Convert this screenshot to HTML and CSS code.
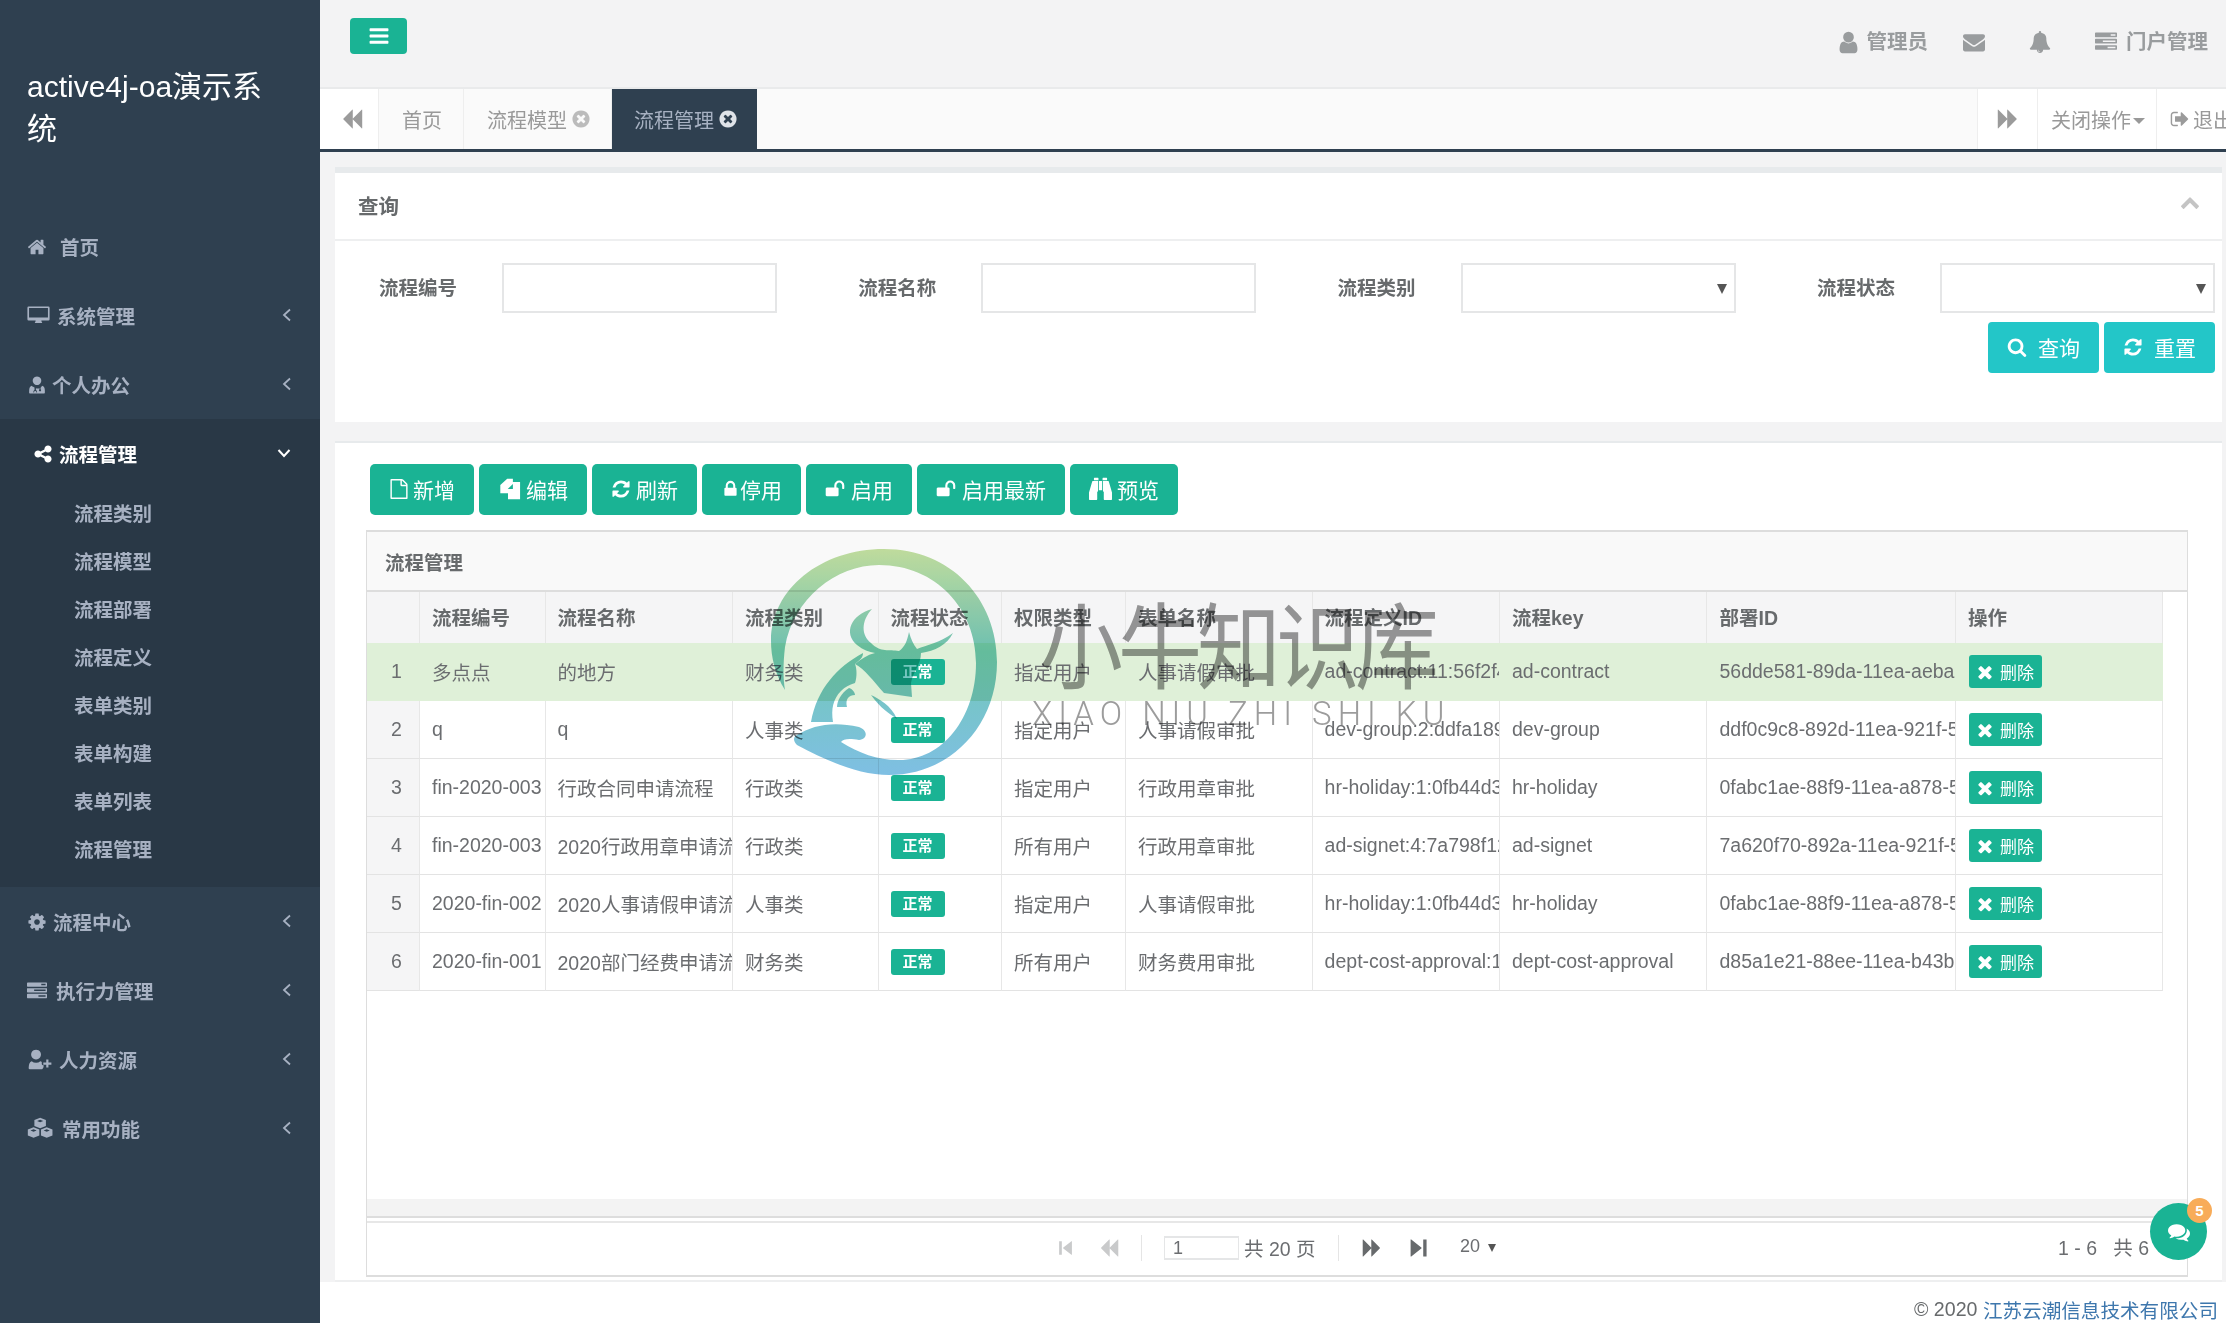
FILE: index.html
```html
<!DOCTYPE html>
<html lang="zh-CN">
<head>
<meta charset="utf-8">
<title>active4j-oa</title>
<link rel="stylesheet" href="styles.css">
</head>
<body>
<svg class="sprite" xmlns="http://www.w3.org/2000/svg">
<symbol id="bars" viewBox="0 0 1792 1792" preserveAspectRatio="xMinYMid meet"><path d="M1664 1344v128q0 26-19 45t-45 19h-1408q-26 0-45-19t-19-45v-128q0-26 19-45t45-19h1408q26 0 45 19t19 45zm0-512v128q0 26-19 45t-45 19h-1408q-26 0-45-19t-19-45v-128q0-26 19-45t45-19h1408q26 0 45 19t19 45zm0-512v128q0 26-19 45t-45 19h-1408q-26 0-45-19t-19-45v-128q0-26 19-45t45-19h1408q26 0 45 19t19 45z"/></symbol>
<symbol id="search" viewBox="0 0 1792 1792" preserveAspectRatio="xMinYMid meet"><path d="M1216 832q0-185-131.5-316.5t-316.5-131.5-316.5 131.5-131.5 316.5 131.5 316.5 316.5 131.5 316.5-131.5 131.5-316.5zm512 832q0 52-38 90t-90 38q-54 0-90-38l-343-342q-179 124-399 124-143 0-273.5-55.5t-225-150-150-225-55.5-273.5 55.5-273.5 150-225 225-150 273.5-55.5 273.5 55.5 225 150 150 225 55.5 273.5q0 220-124 399l343 343q37 37 37 90z"/></symbol>
<symbol id="refresh" viewBox="0 0 1792 1792" preserveAspectRatio="xMinYMid meet"><path d="M1639 1056q0 5-1 7-64 268-268 434.5t-478 166.5q-146 0-282.5-55t-243.5-157l-129 129q-19 19-45 19t-45-19-19-45v-448q0-26 19-45t45-19h448q26 0 45 19t19 45-19 45l-137 137q71 66 161 102t187 36q134 0 250-65t186-179q11-17 53-117 8-23 30-23h192q13 0 22.5 9.5t9.5 22.5zm25-800v448q0 26-19 45t-45 19h-448q-26 0-45-19t-19-45 19-45l138-138q-148-137-349-137-134 0-250 65t-186 179q-11 17-53 117-8 23-30 23h-199q-13 0-22.5-9.5t-9.5-22.5v-7q65-268 270-434.5t480-166.5q146 0 284 55.5t245 156.5l130-129q19-19 45-19t45 19 19 45z"/></symbol>
<symbol id="times" viewBox="0 0 1792 1792" preserveAspectRatio="xMinYMid meet"><path d="M1490 1322q0 40-28 68l-136 136q-28 28-68 28t-68-28l-294-294-294 294q-28 28-68 28t-68-28l-136-136q-28-28-28-68t28-68l294-294-294-294q-28-28-28-68t28-68l136-136q28-28 68-28t68 28l294 294 294-294q28-28 68-28t68 28l136 136q28 28 28 68t-28 68l-294 294 294 294q28 28 28 68z"/></symbol>
<symbol id="lock" viewBox="0 0 1792 1792" preserveAspectRatio="xMinYMid meet"><path d="M640 768h512v-192q0-106-75-181t-181-75-181 75-75 181v192zm832 96v576q0 40-28 68t-68 28h-960q-40 0-68-28t-28-68v-576q0-40 28-68t68-28h32v-192q0-184 132-316t316-132 316 132 132 316v192h32q40 0 68 28t28 68z"/></symbol>
<symbol id="unlock" viewBox="0 0 1792 1792" preserveAspectRatio="xMinYMid meet"><path d="M1728 576v256q0 26-19 45t-45 19h-64q-26 0-45-19t-19-45v-256q0-106-75-181t-181-75-181 75-75 181v192h96q40 0 68 28t28 68v576q0 40-28 68t-68 28h-960q-40 0-68-28t-28-68v-576q0-40 28-68t68-28h672v-192q0-185 131.5-316.5t316.5-131.5 316.5 131.5 131.5 316.5z"/></symbol>
<symbol id="user" viewBox="0 0 1792 1792" preserveAspectRatio="xMinYMid meet"><path d="M1536 1399q0 109-62.5 187t-150.5 78h-854q-88 0-150.5-78t-62.5-187q0-85 8.5-160.5t31.5-152 58.5-131 94-89 134.5-34.5q131 128 313 128t313-128q76 0 134.5 34.5t94 89 58.5 131 31.5 152 8.5 160.5zm-256-887q0 159-112.5 271.5t-271.5 112.5-271.5-112.5-112.5-271.5 112.5-271.5 271.5-112.5 271.5 112.5 112.5 271.5z"/></symbol>
<symbol id="envelope" viewBox="0 0 1792 1792" preserveAspectRatio="xMinYMid meet"><path d="M1792 710v794q0 66-47 113t-113 47h-1472q-66 0-113-47t-47-113v-794q44 49 101 87 362 246 497 345 57 42 92.5 65.5t94.5 48 110 24.5h2q51 0 110-24.5t94.5-48 92.5-65.5q170-123 498-345 57-39 100-87zm0-294q0 79-49 151t-122 123q-376 261-468 325-10 7-42.5 30.5t-54 38-52 32.5-57.5 27-50 9h-2q-23 0-50-9t-57.5-27-52-32.5-54-38-42.5-30.5q-91-64-262-182.5t-205-142.5q-62-42-117-115.5t-55-136.5q0-78 41.5-130t118.5-52h1472q65 0 112.5 47t47.5 113z"/></symbol>
<symbol id="bell" viewBox="0 0 1792 1792" preserveAspectRatio="xMinYMid meet"><path d="M912 1696q0-16-16-16-59 0-101.5-42.5t-42.5-101.5q0-16-16-16t-16 16q0 73 51.5 124.5t124.5 51.5q16 0 16-16zm816-288q0 52-38 90t-90 38h-448q0 106-75 181t-181 75-181-75-75-181h-448q-52 0-90-38t-38-90q50-42 91-88t85-119.5 74.5-158.5 50-206 19.5-260q0-152 117-282.5t307-158.5q-8-19-8-39 0-40 28-68t68-28 68 28 28 68q0 20-8 39 190 28 307 158.5t117 282.5q0 139 19.5 260t50 206 74.5 158.5 85 119.5 91 88z"/></symbol>
<symbol id="home" viewBox="0 0 1792 1792" preserveAspectRatio="xMinYMid meet"><path d="M1472 992v480q0 26-19 45t-45 19h-384v-384h-256v384h-384q-26 0-45-19t-19-45v-480q0-1 .5-3t.5-3l575-474 575 474q1 2 1 6zm223-69l-62 74q-8 9-21 11h-3q-13 0-21-7l-692-577-692 577q-12 8-24 7-13-2-21-11l-62-74q-8-10-7-23.5t11-21.5l719-599q32-26 76-26t76 26l244 204v-195q0-14 9-23t23-9h192q14 0 23 9t9 23v408l219 182q10 8 11 21.5t-7 23.5z"/></symbol>
<symbol id="desktop" viewBox="0 0 1792 1792" preserveAspectRatio="xMinYMid meet"><path fill-rule="evenodd" d="M128 192h1536q96 0 96 96v896q0 96-96 96h-544q0 96 64 160 16 32-32 32h-512q-48 0-32-32 64-64 64-160h-544q-96 0-96-96v-896q0-96 96-96zm32 128v736h1472v-736z"/></symbol>
<symbol id="userMd" viewBox="0 0 1792 1792" preserveAspectRatio="xMinYMid meet"><path fill-rule="evenodd" d="M896 128a384 384 0 1 1-1 0zM448 960q-256 64-256 448v192q0 64 64 64h1280q64 0 64-64v-192q0-384-256-448-64 130-128 192v130a96 96 0 1 1-96 0v-105q-160 80-320 0v170q100 40 100 160v64h-64v-64q0-64-100-64t-100 64v64h-64v-64q0-120 100-160v-230q-140-80-224-100z"/></symbol>
<symbol id="share" viewBox="0 0 1792 1792" preserveAspectRatio="xMinYMid meet"><path d="M1344 1024q133 0 226.5 93.5t93.5 226.5-93.5 226.5-226.5 93.5-226.5-93.5-93.5-226.5q0-12 2-34l-360-180q-92 86-218 86-133 0-226.5-93.5t-93.5-226.5 93.5-226.5 226.5-93.5q126 0 218 86l360-180q-2-22-2-34 0-133 93.5-226.5t226.5-93.5 226.5 93.5 93.5 226.5-93.5 226.5-226.5 93.5q-126 0-218-86l-360 180q2 22 2 34t-2 34l360 180q92-86 218-86z"/></symbol>
<symbol id="cog" viewBox="0 0 1792 1792" preserveAspectRatio="xMinYMid meet"><path d="M1152 896q0-106-75-181t-181-75-181 75-75 181 75 181 181 75 181-75 75-181zm512-109v222q0 12-8 23t-20 13l-185 28q-19 54-39 91 35 50 107 138 10 12 10 25t-9 23q-27 37-99 108t-94 71q-12 0-26-9l-138-108q-44 23-91 38-16 136-29 186-7 28-36 28h-222q-14 0-24.5-8.5t-11.5-21.5l-28-184q-49-16-90-37l-141 107q-10 9-25 9-14 0-25-11-126-114-165-168-7-10-7-23 0-12 8-23 15-21 51-66.5t54-70.5q-27-50-41-99l-183-27q-13-2-21-12.5t-8-23.5v-222q0-12 8-23t19-13l186-28q14-46 39-92-40-57-107-138-10-12-10-24 0-10 9-23 26-36 98.5-107.5t94.5-71.5q13 0 26 10l138 107q44-23 91-38 16-136 29-186 7-28 36-28h222q14 0 24.5 8.5t11.5 21.5l28 184q49 16 90 37l142-107q9-9 24-9 13 0 25 10 129 119 165 170 7 8 7 22 0 12-8 23-15 21-51 66.5t-54 70.5q26 50 41 98l183 28q13 2 21 12.5t8 23.5z"/></symbol>
<symbol id="tasks" viewBox="0 0 1792 1792" preserveAspectRatio="xMinYMid meet"><path d="M1024 1408h640v-128h-640v128zm-384-512h1024v-128h-1024v128zm640-512h384v-128h-384v128zm512 832v256q0 26-19 45t-45 19h-1664q-26 0-45-19t-19-45v-256q0-26 19-45t45-19h1664q26 0 45 19t19 45zm0-512v256q0 26-19 45t-45 19h-1664q-26 0-45-19t-19-45v-256q0-26 19-45t45-19h1664q26 0 45 19t19 45zm0-512v256q0 26-19 45t-45 19h-1664q-26 0-45-19t-19-45v-256q0-26 19-45t45-19h1664q26 0 45 19t19 45z"/></symbol>
<symbol id="userPlus" viewBox="0 0 2048 1792" preserveAspectRatio="xMinYMid meet"><path d="M704 896a384 384 0 1 1 1 0zM1184 1664H224q-96 0-96-112 0-460 240-528 140 120 336 120t336 -120q60 14 110 60v172q0 90 90 90h60v60q0 130 -116 258zM1500 896h170v230h230v170h-230v230h-170v-230h-230v-170h230z"/></symbol>
<symbol id="cubes" viewBox="0 0 2048 1792" preserveAspectRatio="xMinYMid meet"><path fill-rule="evenodd" d="M1024 64l448 176v470l-448 176-448-176V240zM1024 220l-240 94 240 94 240-94zM512 800l448 176v470l-448 176-448-176V976zM512 956l-240 94 240 94 240-94zM1536 800l448 176v470l-448 176-448-176V976zM1536 956l-240 94 240 94 240-94z"/></symbol>
<symbol id="binoculars" viewBox="0 0 1792 1792" preserveAspectRatio="xMinYMid meet"><path d="M704 320v768q0 26-19 45t-45 19v576q0 26-19 45t-45 19h-512q-26 0-45-19t-19-45v-512l249-873q7-23 31-23h424zm320 0v704h-256v-704h256zm768 896v512q0 26-19 45t-45 19h-512q-26 0-45-19t-19-45v-576q-26 0-45-19t-19-45v-768h424q24 0 31 23zM736 96v160h-352v-160q0-14 9-23t23-9h288q14 0 23 9t9 23zm672 0v160h-352v-160q0-14 9-23t23-9h288q14 0 23 9t9 23z"/></symbol>
<symbol id="fileO" viewBox="0 0 1792 1792" preserveAspectRatio="xMinYMid meet"><path d="M1596 380q28 28 48 76t20 88v1152q0 40-28 68t-68 28h-1344q-40 0-68-28t-28-68v-1600q0-40 28-68t68-28h896q40 0 88 20t76 48zm-444-244v376h376q-10-29-22-41l-313-313q-12-12-41-22zm384 1528v-1024h-416q-40 0-68-28t-28-68v-416h-768v1536h1280z"/></symbol>
<symbol id="files" viewBox="0 0 1792 1792" preserveAspectRatio="xMinYMid meet"><path fill-rule="evenodd" d="M1000 128h-280l-540 500v640h600v460h940v-1340h-560v-260zM1160 540v400h-400z"/></symbol>
<symbol id="backward" viewBox="0 0 1792 1792" preserveAspectRatio="xMinYMid meet"><path d="M1683 141q19-19 32-13t13 32v1472q0 26-13 32t-32-13l-710-710q-9-9-13-19v710q0 26-13 32t-32-13l-710-710q-19-19-19-45t19-45l710-710q19-19 32-13t13 32v710q4-10 13-19z"/></symbol>
<symbol id="forward" viewBox="0 0 1792 1792" preserveAspectRatio="xMinYMid meet"><path d="M109 1651q-19 19-32 13t-13-32v-1472q0-26 13-32t32 13l710 710q9 9 13 19v-710q0-26 13-32t32 13l710 710q19 19 19 45t-19 45l-710 710q-19 19-32 13t-13-32v-710q-4 10-13 19z"/></symbol>
<symbol id="stepB" viewBox="0 0 1792 1792" preserveAspectRatio="xMinYMid meet"><path d="M128 128h300v1536H128zM1500 141q30-30 44-13t14 32v1472q0 26-14 32t-44-13l-900-710q-30-26-30-45t30-45z"/></symbol>
<symbol id="stepF" viewBox="0 0 1792 1792" preserveAspectRatio="xMinYMid meet"><path d="M1364 128h300v1536h-300zM292 141q-30-30-44-13t-14 32v1472q0 26 14 32t44-13l900-710q30-26 30-45t-30-45z"/></symbol>
<symbol id="timesCircle" viewBox="0 0 1792 1792" preserveAspectRatio="xMinYMid meet"><path d="M1277 1122q0-26-19-45l-181-181 181-181q19-19 19-45 0-27-19-46l-90-90q-19-19-46-19-26 0-45 19l-181 181-181-181q-19-19-45-19-27 0-46 19l-90 90q-19 19-19 46 0 26 19 45l181 181-181 181q-19 19-19 45 0 27 19 46l90 90q19 19 46 19 26 0 45-19l181-181 181 181q19 19 45 19 27 0 46-19l90-90q19-19 19-46zm387-226q0 209-103 385.5t-279.5 279.5-385.5 103-385.5-103-279.5-279.5-103-385.5 103-385.5 279.5-279.5 385.5-103 385.5 103 279.5 279.5 103 385.5z"/></symbol>
<symbol id="chevUp" viewBox="0 0 1792 1792" preserveAspectRatio="xMinYMid meet"><path d="M1683 1331l-166 165q-19 19-45 19t-45-19l-531-531-531 531q-19 19-45 19t-45-19l-166-165q-19-19-19-45.5t19-45.5l742-741q19-19 45-19t45 19l742 741q19 19 19 45.5t-19 45.5z"/></symbol>
<symbol id="comments" viewBox="0 0 1792 1792" preserveAspectRatio="xMinYMid meet"><path d="M1408 768q0 139-94 257t-256.5 186.5-353.5 68.5q-86 0-176-16-124 88-278 128-36 9-86 16h-3q-11 0-20.5-8t-11.5-21q-1-3-1-6.5t.5-6.5 2-6l2.5-5 3.5-5.5 4-5 4.5-5 4-4.5q5-6 23-25t26-29.5 22.5-29 25-38.5 20.5-44q-124-72-195-177t-71-224q0-139 94-257t256.5-186.5 353.5-68.5 353.5 68.5 256.5 186.5 94 257zm384 256q0 120-71 224.5t-195 176.5q10 24 20.5 44t25 38.5 22.5 29 26 29.5 23 25q1 1 4 4.5t4.5 5 4 5 3.5 5.5l2.5 5 2 6 .5 6.5-1 6.5q-3 14-13 22t-22 7q-50-7-86-16-154-40-278-128-90 16-176 16-271 0-472-132 58 4 88 4 161 0 309-45t264-129q125-92 192-212t67-254q0-77-23-152 129 71 204 178t75 230z"/></symbol>
<symbol id="signOut" viewBox="0 0 1792 1792" preserveAspectRatio="xMinYMid meet"><path d="M704 1440q0 4 1 20t.5 26.5-3 23.5-10 19.5-20.5 6.5h-320q-119 0-203.5-84.5t-84.5-203.5v-704q0-119 84.5-203.5t203.5-84.5h320q13 0 22.5 9.5t9.5 22.5q0 4 1 20t.5 26.5-3 23.5-10 19.5-20.5 6.5h-320q-66 0-113 47t-47 113v704q0 66 47 113t113 47h312l11.5 1 11.5 3 8 5.5 7 9 2 13.5zm928-544q0 26-19 45l-544 544q-19 19-45 19t-45-19-19-45v-288h-448q-26 0-45-19t-19-45v-384q0-26 19-45t45-19h448v-288q0-26 19-45t45-19 45 19l544 544q19 19 19 45z"/></symbol>
<symbol id="angleL" viewBox="0 0 10 14"><path d="M8 1.5L2 7l6 5.500" fill="none" stroke="currentColor" stroke-width="1.800"/></symbol>
<symbol id="angleD" viewBox="0 0 14 10"><path d="M1.500 2L7 8l5.500-6" fill="none" stroke="currentColor" stroke-width="2"/></symbol>
</svg>

<div class="app">
  <aside class="sidebar">
    <div class="brand">active4j-oa演示系统</div>
    <nav>
      <a class="nav-item"><svg class="ni ni-33"><use href="#home"/></svg>首页</a>
      <a class="nav-item"><svg class="ni ni-30 ni-big"><use href="#desktop"/></svg>系统管理<svg class="ang"><use href="#angleL"/></svg></a>
      <a class="nav-item"><svg class="ni ni-25"><use href="#userMd"/></svg>个人办公<svg class="ang"><use href="#angleL"/></svg></a>
      <div class="nav-group">
        <a class="nav-item active"><svg class="ni ni-26"><use href="#share"/></svg>流程管理<svg class="ang-d"><use href="#angleD"/></svg></a>
        <a class="sub-item">流程类别</a>
        <a class="sub-item">流程模型</a>
        <a class="sub-item">流程部署</a>
        <a class="sub-item">流程定义</a>
        <a class="sub-item">表单类别</a>
        <a class="sub-item">表单构建</a>
        <a class="sub-item">表单列表</a>
        <a class="sub-item">流程管理</a>
      </div>
      <a class="nav-item"><svg class="ni ni-26"><use href="#cog"/></svg>流程中心<svg class="ang"><use href="#angleL"/></svg></a>
      <a class="nav-item"><svg class="ni ni-29"><use href="#tasks"/></svg>执行力管理<svg class="ang"><use href="#angleL"/></svg></a>
      <a class="nav-item"><svg class="ni ni-32 ni-big"><use href="#userPlus"/></svg>人力资源<svg class="ang"><use href="#angleL"/></svg></a>
      <a class="nav-item"><svg class="ni ni-35 ni-big"><use href="#cubes"/></svg>常用功能<svg class="ang"><use href="#angleL"/></svg></a>
    </nav>
  </aside>

  <main class="main">
    <header class="topbar">
      <button class="menu-btn"><svg class="ic-22"><use href="#bars"/></svg></button>
      <div class="top-right">
        <svg class="top-ic user-ic"><use href="#user"/></svg><span class="top-txt admin">管理员</span>
        <svg class="top-ic mail-ic"><use href="#envelope"/></svg>
        <svg class="top-ic bell-ic"><use href="#bell"/></svg>
        <svg class="top-ic task-ic"><use href="#tasks"/></svg><span class="top-txt">门户管理</span>
      </div>
    </header>

    <div class="tabs">
      <div class="tab-nav"><svg class="ic-22 gray"><use href="#backward"/></svg></div>
      <div class="tab-list">
        <a class="tab tab-home">首页</a>
        <a class="tab tab-model">流程模型<svg class="tab-x"><use href="#timesCircle"/></svg></a>
        <a class="tab tab-active">流程管理<svg class="tab-x"><use href="#timesCircle"/></svg></a>
      </div>
      <div class="tab-tool tool-next"><svg class="ic-22 gray"><use href="#forward"/></svg></div>
      <div class="tab-tool tool-close">关闭操作<span class="caret"></span></div>
      <div class="tab-tool tool-exit"><svg class="ic-20 gray"><use href="#signOut"/></svg>退出</div>
    </div>

    <section class="panel panel-query">
      <div class="panel-head">查询<svg class="collapse"><use href="#chevUp"/></svg></div>
      <div class="panel-body">
        <div class="form-grid">
          <label class="field"><span class="field-label">流程编号</span><input class="field-input" type="text"></label>
          <label class="field"><span class="field-label">流程名称</span><input class="field-input" type="text"></label>
          <div class="field"><span class="field-label">流程类别</span><div class="field-input select-box"></div></div>
          <div class="field"><span class="field-label">流程状态</span><div class="field-input select-box"></div></div>
        </div>
        <div class="form-actions">
          <button class="btn-info"><svg class="ic-20"><use href="#search"/></svg>查询</button>
          <button class="btn-info"><svg class="ic-20"><use href="#refresh"/></svg>重置</button>
        </div>
      </div>
    </section>

    <section class="panel panel-grid">
      <div class="toolbar">
        <button class="btn-primary"><svg class="tb tb-25"><use href="#fileO"/></svg>新增</button>
        <button class="btn-primary"><svg class="tb tb-29"><use href="#files"/></svg>编辑</button>
        <button class="btn-primary"><svg class="tb tb-26"><use href="#refresh"/></svg>刷新</button>
        <button class="btn-primary"><svg class="tb tb-20"><use href="#lock"/></svg>停用</button>
        <button class="btn-primary"><svg class="tb tb-27"><use href="#unlock"/></svg>启用</button>
        <button class="btn-primary"><svg class="tb tb-27"><use href="#unlock"/></svg>启用最新</button>
        <button class="btn-primary"><svg class="tb tb-29"><use href="#binoculars"/></svg>预览</button>
      </div>
      <div class="grid">
        <div class="grid-caption">流程管理</div>
        <div class="grid-body">
          <table class="data">
            <colgroup>
              <col class="c0"><col class="c1"><col class="c2"><col class="c3"><col class="c4"><col class="c5"><col class="c6"><col class="c7"><col class="c8"><col class="c9"><col class="c10">
            </colgroup>
            <thead>
              <tr><th></th><th>流程编号</th><th>流程名称</th><th>流程类别</th><th>流程状态</th><th>权限类型</th><th>表单名称</th><th>流程定义ID</th><th>流程key</th><th>部署ID</th><th>操作</th></tr>
            </thead>
            <tbody>
              <tr class="selected"><td class="num">1</td><td>多点点</td><td>的地方</td><td>财务类</td><td><span class="badge">正常</span></td><td>指定用户</td><td>人事请假审批</td><td>ad-contract:11:56f2f4c3</td><td>ad-contract</td><td>56dde581-89da-11ea-aeba-5254</td><td><button class="btn-del"><svg class="ic-20"><use href="#times"/></svg>删除</button></td></tr>
              <tr><td class="num">2</td><td>q</td><td>q</td><td>人事类</td><td><span class="badge">正常</span></td><td>指定用户</td><td>人事请假审批</td><td>dev-group:2:ddfa189a</td><td>dev-group</td><td>ddf0c9c8-892d-11ea-921f-5254</td><td><button class="btn-del"><svg class="ic-20"><use href="#times"/></svg>删除</button></td></tr>
              <tr><td class="num">3</td><td>fin-2020-003</td><td>行政合同申请流程</td><td>行政类</td><td><span class="badge">正常</span></td><td>指定用户</td><td>行政用章审批</td><td>hr-holiday:1:0fb44d3a</td><td>hr-holiday</td><td>0fabc1ae-88f9-11ea-a878-5254</td><td><button class="btn-del"><svg class="ic-20"><use href="#times"/></svg>删除</button></td></tr>
              <tr><td class="num">4</td><td>fin-2020-003</td><td>2020行政用章申请流程</td><td>行政类</td><td><span class="badge">正常</span></td><td>所有用户</td><td>行政用章审批</td><td>ad-signet:4:7a798f12</td><td>ad-signet</td><td>7a620f70-892a-11ea-921f-5254</td><td><button class="btn-del"><svg class="ic-20"><use href="#times"/></svg>删除</button></td></tr>
              <tr><td class="num">5</td><td>2020-fin-002</td><td>2020人事请假申请流程</td><td>人事类</td><td><span class="badge">正常</span></td><td>指定用户</td><td>人事请假审批</td><td>hr-holiday:1:0fb44d3a</td><td>hr-holiday</td><td>0fabc1ae-88f9-11ea-a878-5254</td><td><button class="btn-del"><svg class="ic-20"><use href="#times"/></svg>删除</button></td></tr>
              <tr><td class="num">6</td><td>2020-fin-001</td><td>2020部门经费申请流程</td><td>财务类</td><td><span class="badge">正常</span></td><td>所有用户</td><td>财务费用审批</td><td>dept-cost-approval:1:d8</td><td>dept-cost-approval</td><td>d85a1e21-88ee-11ea-b43b-5254</td><td><button class="btn-del"><svg class="ic-20"><use href="#times"/></svg>删除</button></td></tr>
            </tbody>
          </table>
        </div>
        <div class="grid-band"></div>
        <div class="pager">
          <svg class="pg first"><use href="#stepB"/></svg>
          <svg class="pg prev"><use href="#backward"/></svg>
          <span class="pg-sep sep-a"></span>
          <input class="pg-input" type="text" value="1">
          <span class="pg-total">共 20 页</span>
          <span class="pg-sep sep-b"></span>
          <svg class="pg next"><use href="#forward"/></svg>
          <svg class="pg last"><use href="#stepF"/></svg>
          <span class="pg-size">20<span class="pg-caret"></span></span>
          <span class="pg-info">1 - 6 &nbsp; 共 6</span>
        </div>
      </div>
    </section>

    <footer class="footer">© 2020 <a class="footer-link">江苏云潮信息技术有限公司</a></footer>
  </main>
</div>

<div class="watermark">
  <svg class="wm-logo" viewBox="0 0 228 228" xmlns="http://www.w3.org/2000/svg">
    <defs>
      <linearGradient id="wmg" gradientUnits="userSpaceOnUse" x1="0" y1="0" x2="0" y2="228">
        <stop offset="0" stop-color="#c4e1a0"/>
        <stop offset="0.45" stop-color="#72c8b8"/>
        <stop offset="1" stop-color="#7fbfe4"/>
      </linearGradient>
    </defs>
    <g fill="url(#wmg)">
      <path d="M14 141C4 125 0 108 0 92C0 40 50 0 113 0C180 0 226 50 226 113C226 178 178 226 118 226C88 226 56 212 26 196C22 192 22 188 26 186C42 176 62 172 88 178C97 181 97 190 88 191C78 189 72 190 70 193C88 204 106 211 127 211C170 212 205 170 205 114C205 60 165 16 108 16C65 16 22 50 14 98C12 115 12 130 14 141Z"/>
      <path d="M101 60C80 66 72 84 86 96C92 101 98 103 104 104C96 106 90 110 84 115C94 120 102 132 113 144L141 148L140 134C142 122 150 116 150 104C164 102 176 96 182 84C168 94 156 96 146 100C142 95 140 90 138 83C136 92 134 98 128 102C118 100 110 104 100 94C90 86 90 72 101 60Z"/>
      <path d="M92 104C66 118 46 140 40 173L62 173C60 160 62 150 70 142C74 138 78 136 84 134C86 128 86 120 84 115C90 110 92 108 92 104Z"/>
      <path d="M78 139C70 144 66 152 66 158L76 158C74 150 78 146 84 146C84 144 82 140 78 139Z"/>
      <path d="M100 146C108 150 120 156 126 170C118 164 110 160 100 146Z"/>
    </g>
  </svg>
  <div class="wm-text">
    <div class="wm-cn">小牛知识库</div>
    <div class="wm-en">XIAO NIU ZHI SHI KU</div>
  </div>
</div>

<div class="chat">
  <svg class="chat-ic"><use href="#comments"/></svg>
  <span class="chat-badge">5</span>
</div>
</body>
</html>
```

FILE: styles.css
```css
* { box-sizing: border-box; }
html, body { margin: 0; height: 1323px; overflow: hidden; }
body {
  position: relative;
  width: 2226px;
  font-family: "Liberation Sans", "Noto Sans CJK SC", sans-serif;
  font-size: 19.5px;
  color: #676a6c;
  background: #f3f3f4;
}
svg { fill: currentColor; flex: none; display: block; }
button { font-family: inherit; border: 0; cursor: pointer; }
.sprite { position: absolute; width: 0; height: 0; overflow: hidden; }
.app { display: flex; height: 1323px; }

/* sidebar */
.sidebar { width: 320px; flex: none; background: #2f4050; color: #a7b1c2; }
.brand { padding: 66px 40px 62px 27px; font-size: 30px; line-height: 42px; color: #fff; }
.nav-item { display: flex; align-items: center; height: 69px; padding-left: 27px; font-weight: 700; font-size: 19.5px; position: relative; }
.nav-group { background: #293846; padding-bottom: 15px; }
.nav-item.active { color: #fff; padding-left: 33px; }
.sub-item { display: flex; align-items: center; height: 48px; padding-left: 74px; font-weight: 700; }
.ni { height: 20px; }
.ni-big { height: 23px; }
.ni-25 { width: 25px; }
.ni-26 { width: 26px; }
.ni-29 { width: 29px; }
.ni-30 { width: 30px; }
.ni-32 { width: 32px; }
.ni-33 { width: 33px; }
.ni-35 { width: 35px; }
.ang { position: absolute; left: 282px; top: 27px; width: 10px; height: 14px; }
.ang-d { position: absolute; left: 277px; top: 29px; width: 14px; height: 10px; }

/* main column */
.main { flex: 1; min-width: 0; display: flex; flex-direction: column; overflow: hidden; }
.topbar { height: 89px; flex: none; display: flex; justify-content: space-between; align-items: flex-start; border-bottom: 2px solid #e9eaeb; padding: 18px 18px 0 30px; }
.menu-btn { width: 57px; height: 36px; background: #1ab394; color: #fff; border-radius: 4px; display: flex; align-items: center; justify-content: center; padding: 0; }
.ic-22 { width: 22px; height: 22px; }
.ic-20 { width: 20px; height: 20px; }
.gray { color: #9b9b9b; }
.top-right { display: flex; align-items: center; height: 48px; color: #999c9e; font-weight: 700; font-size: 20.5px; }
.top-ic { width: 22px; height: 22px; }
.top-txt { line-height: 1; }
.user-ic { width: 25px; height: 25px; margin-right: 6px; }
.mail-ic { margin-left: 35px; }
.bell-ic { margin-left: 44px; }
.task-ic { margin-left: 44px; margin-right: 9px; }

/* tabs */
.tabs { height: 63px; flex: none; display: flex; border-bottom: 3px solid #2f4050; background: #fafafa; color: #999; font-size: 20px; }
.tab-nav { width: 59px; background: #fff; display: flex; align-items: center; padding-left: 21px; border-right: 1px solid #eee; }
.tab-list { display: flex; flex: 1; }
.tab { display: flex; align-items: center; border-right: 1px solid #eee; }
.tab-home { width: 85px; padding-left: 23px; }
.tab-model { width: 148px; padding-left: 23px; }
.tab-active { width: 145px; padding-left: 22px; background: #2f4050; color: #a7b1c2; border-right: 0; }
.tab-x { width: 20px; height: 20px; margin-left: 4px; color: #bbb; }
.tab-active .tab-x { color: #dfe3e8; }
.tab-tool { background: #fff; display: flex; align-items: center; border-left: 1px solid #eee; }
.tool-next { width: 60px; padding-left: 19px; }
.tool-close { width: 119px; padding-left: 13px; }
.caret { margin-left: 2px; margin-top: 3px; border: 6px solid transparent; border-top-color: #999; border-bottom: 0; }
.tool-exit { width: 70px; padding-left: 13px; gap: 3px; white-space: nowrap; overflow: hidden; }

/* panels */
.panel { background: #fff; margin-right: 4px; margin-left: 15px; flex: none; }
.panel-query { margin-top: 15px; height: 255px; border-top: 6px solid #e7eaec; }
.panel-head { height: 68px; display: flex; justify-content: space-between; align-items: center; padding: 0 22px 2px 23px; border-bottom: 2px solid #eeeff0; font-size: 20.5px; font-weight: 700; }
.collapse { width: 20px; height: 20px; color: #c4c4c4; margin-bottom: 6px; }
.panel-body { padding-top: 22px; }
.form-grid { display: grid; grid-template-columns: repeat(4, 479.3px); padding-left: 44px; }
.field { display: flex; align-items: center; }
.field-label { width: 123px; font-weight: 700; font-size: 19.5px; padding-bottom: 4px; }
.field-input { width: 275px; height: 50px; border: 2px solid #e5e6e7; background: #fff; display: block; border-radius: 0; outline: 0; padding: 0; }
.select-box { position: relative; }
.select-box::after { content: ""; position: absolute; right: 7px; top: 19px; border: 5px solid transparent; border-top: 10px solid #555; border-bottom: 0; }
.form-actions { display: flex; justify-content: flex-end; gap: 5px; padding-right: 7px; margin-top: 9px; }
.btn-info { height: 51px; display: flex; align-items: center; gap: 11px; padding: 0 19px 2px; background: #23c6c8; color: #fff; font-size: 21px; border-radius: 4px; }

.panel-grid { margin-top: 19px; height: 841px; border-top: 2px solid #e7eaec; padding: 21px 34px 3px 31px; border-bottom: 2px solid #eeeff0; display: flex; flex-direction: column; }
.toolbar { display: flex; gap: 5px; padding-left: 4px; height: 51px; flex: none; margin-bottom: 15px; }
.btn-primary { height: 51px; display: flex; align-items: center; padding: 0 19px 2px 19px; background: #1ab394; color: #fff; font-size: 21px; border-radius: 5px; white-space: nowrap; }
.tb { height: 20px; }
.tb-20 { width: 19px; }
.tb-25 { width: 24px; }
.tb-26 { width: 25px; }
.tb-27 { width: 26px; }
.tb-29 { width: 28px; height: 23px; }

/* grid */
.grid { flex: 1; min-height: 0; display: flex; flex-direction: column; border: 2px solid #ddd; border-left-width: 1px; border-right-width: 1px; }
.grid-caption { height: 60px; flex: none; display: flex; align-items: center; padding-left: 18px; background: #f9f9f9; border-bottom: 2px solid #ddd; font-weight: 700; }
.grid-body { flex: 1; min-height: 0; overflow: hidden; background: #fff; }
.data { table-layout: fixed; border-collapse: separate; border-spacing: 0; width: 1796px; }
.c0 { width: 53px; } .c1 { width: 125.5px; } .c2 { width: 187.5px; } .c3 { width: 145.5px; } .c4 { width: 123.5px; } .c5 { width: 124px; }
.c6 { width: 186.6px; } .c7 { width: 187.4px; } .c8 { width: 207.5px; } .c9 { width: 248.5px; } .c10 { width: 207px; }
.data th, .data td { padding: 0 0 0 12px; text-align: left; white-space: nowrap; overflow: hidden; border-right: 1px solid #e7e7e7; }
.data th { height: 51px; background: #f5f5f6; font-weight: 700; color: #676a6c; padding-bottom: 3px; }
.data td { height: 58px; border-bottom: 1px solid #e3e3e3; color: #6b6d70; }
.data .num { background: #f5f5f6; text-align: center; padding-left: 7px; }
.selected td, .data .selected .num { background: #dff0d8; border-bottom-color: #dff0d8; border-right-color: #dff0d8; }
.badge { display: inline-block; width: 54px; height: 26px; line-height: 26px; text-align: center; background: #1ab394; color: #fff; font-size: 15px; font-weight: 700; border-radius: 3px; vertical-align: middle; }
.btn-del { height: 33px; width: 73px; margin-left: 1px; display: flex; align-items: center; gap: 5px; padding: 0 0 0 6px; background: #1ab394; color: #fff; font-size: 17px; border-radius: 3px; }
.grid-band { height: 19px; flex: none; background: #f3f3f3; border-bottom: 2px solid #ddd; }
.pager { height: 54px; flex: none; margin-top: 3px; border-top: 2px solid #e7e7e7; display: flex; align-items: center; padding: 0 0 2px 691px; color: #6b6d70; font-size: 19.5px; }
.pg { width: 20px; height: 20px; color: #676a6c; }
.first, .prev { color: #c9cacb; }
.first { width: 16px; margin-right: 25px; }
.prev { margin-right: 22px; }
.pg-sep { width: 1px; height: 26px; background: #e5e5e5; }
.pg-input { width: 75px; height: 24px; margin-left: 22px; border: 1px solid #e5e6e7; border-bottom-width: 2px; border-top-width: 2px; outline: 0; padding: 0 0 0 8px; font: inherit; font-size: 18px; color: #6b6d70; background: #fff; }
.pg-total { margin-left: 5px; width: 94px; white-space: nowrap; padding-bottom: 1px; }
.next { margin-left: 23px; }
.last { margin-left: 26px; }
.pg-size { margin-left: 32px; margin-top: -3px; font-size: 18px; display: flex; align-items: center; gap: 8px; }
.pg-caret { border: 4px solid transparent; border-top: 8px solid #555; border-bottom: 0; margin-top: 2px; }
.pg-info { margin-left: auto; white-space: nowrap; width: 129px; padding-bottom: 4px; }

/* footer */
.footer { flex: 1; background: #fff; display: flex; justify-content: flex-end; align-items: center; padding-right: 8px; white-space: pre; font-size: 19.6px; padding-top: 13px; }
.footer-link { color: #3e77ad; }

/* overlays */
.watermark { position: absolute; left: 771px; top: 549px; width: 680px; height: 230px; display: flex; pointer-events: none; mix-blend-mode: multiply; }
.wm-logo { width: 228px; height: 228px; }
.wm-text { position: absolute; left: 268px; top: 44px; width: 420px; }
.wm-cn { font-family: "Noto Sans CJK SC", sans-serif; font-weight: 400; font-size: 84px; letter-spacing: -5px; line-height: 104px; color: rgba(110, 110, 110, .7); white-space: nowrap; transform: scaleY(1.12) translateY(-3px); }
.wm-en { font-family: Roboto, sans-serif; font-weight: 300; font-size: 33px; line-height: 34px; letter-spacing: 6px; color: rgba(90, 90, 90, .6); white-space: nowrap; margin-left: -7px; }
.chat { position: absolute; left: 2150px; top: 1203px; width: 57px; height: 57px; border-radius: 50%; background: #1ab394; color: #fff; display: flex; align-items: center; justify-content: center; }
.chat-ic { width: 22px; height: 22px; }
.chat-badge { position: absolute; right: -5px; top: -5px; width: 25px; height: 25px; border-radius: 50%; background: #f8ac59; color: #fff; font-size: 15px; font-weight: 700; text-align: center; line-height: 25px; }
```
